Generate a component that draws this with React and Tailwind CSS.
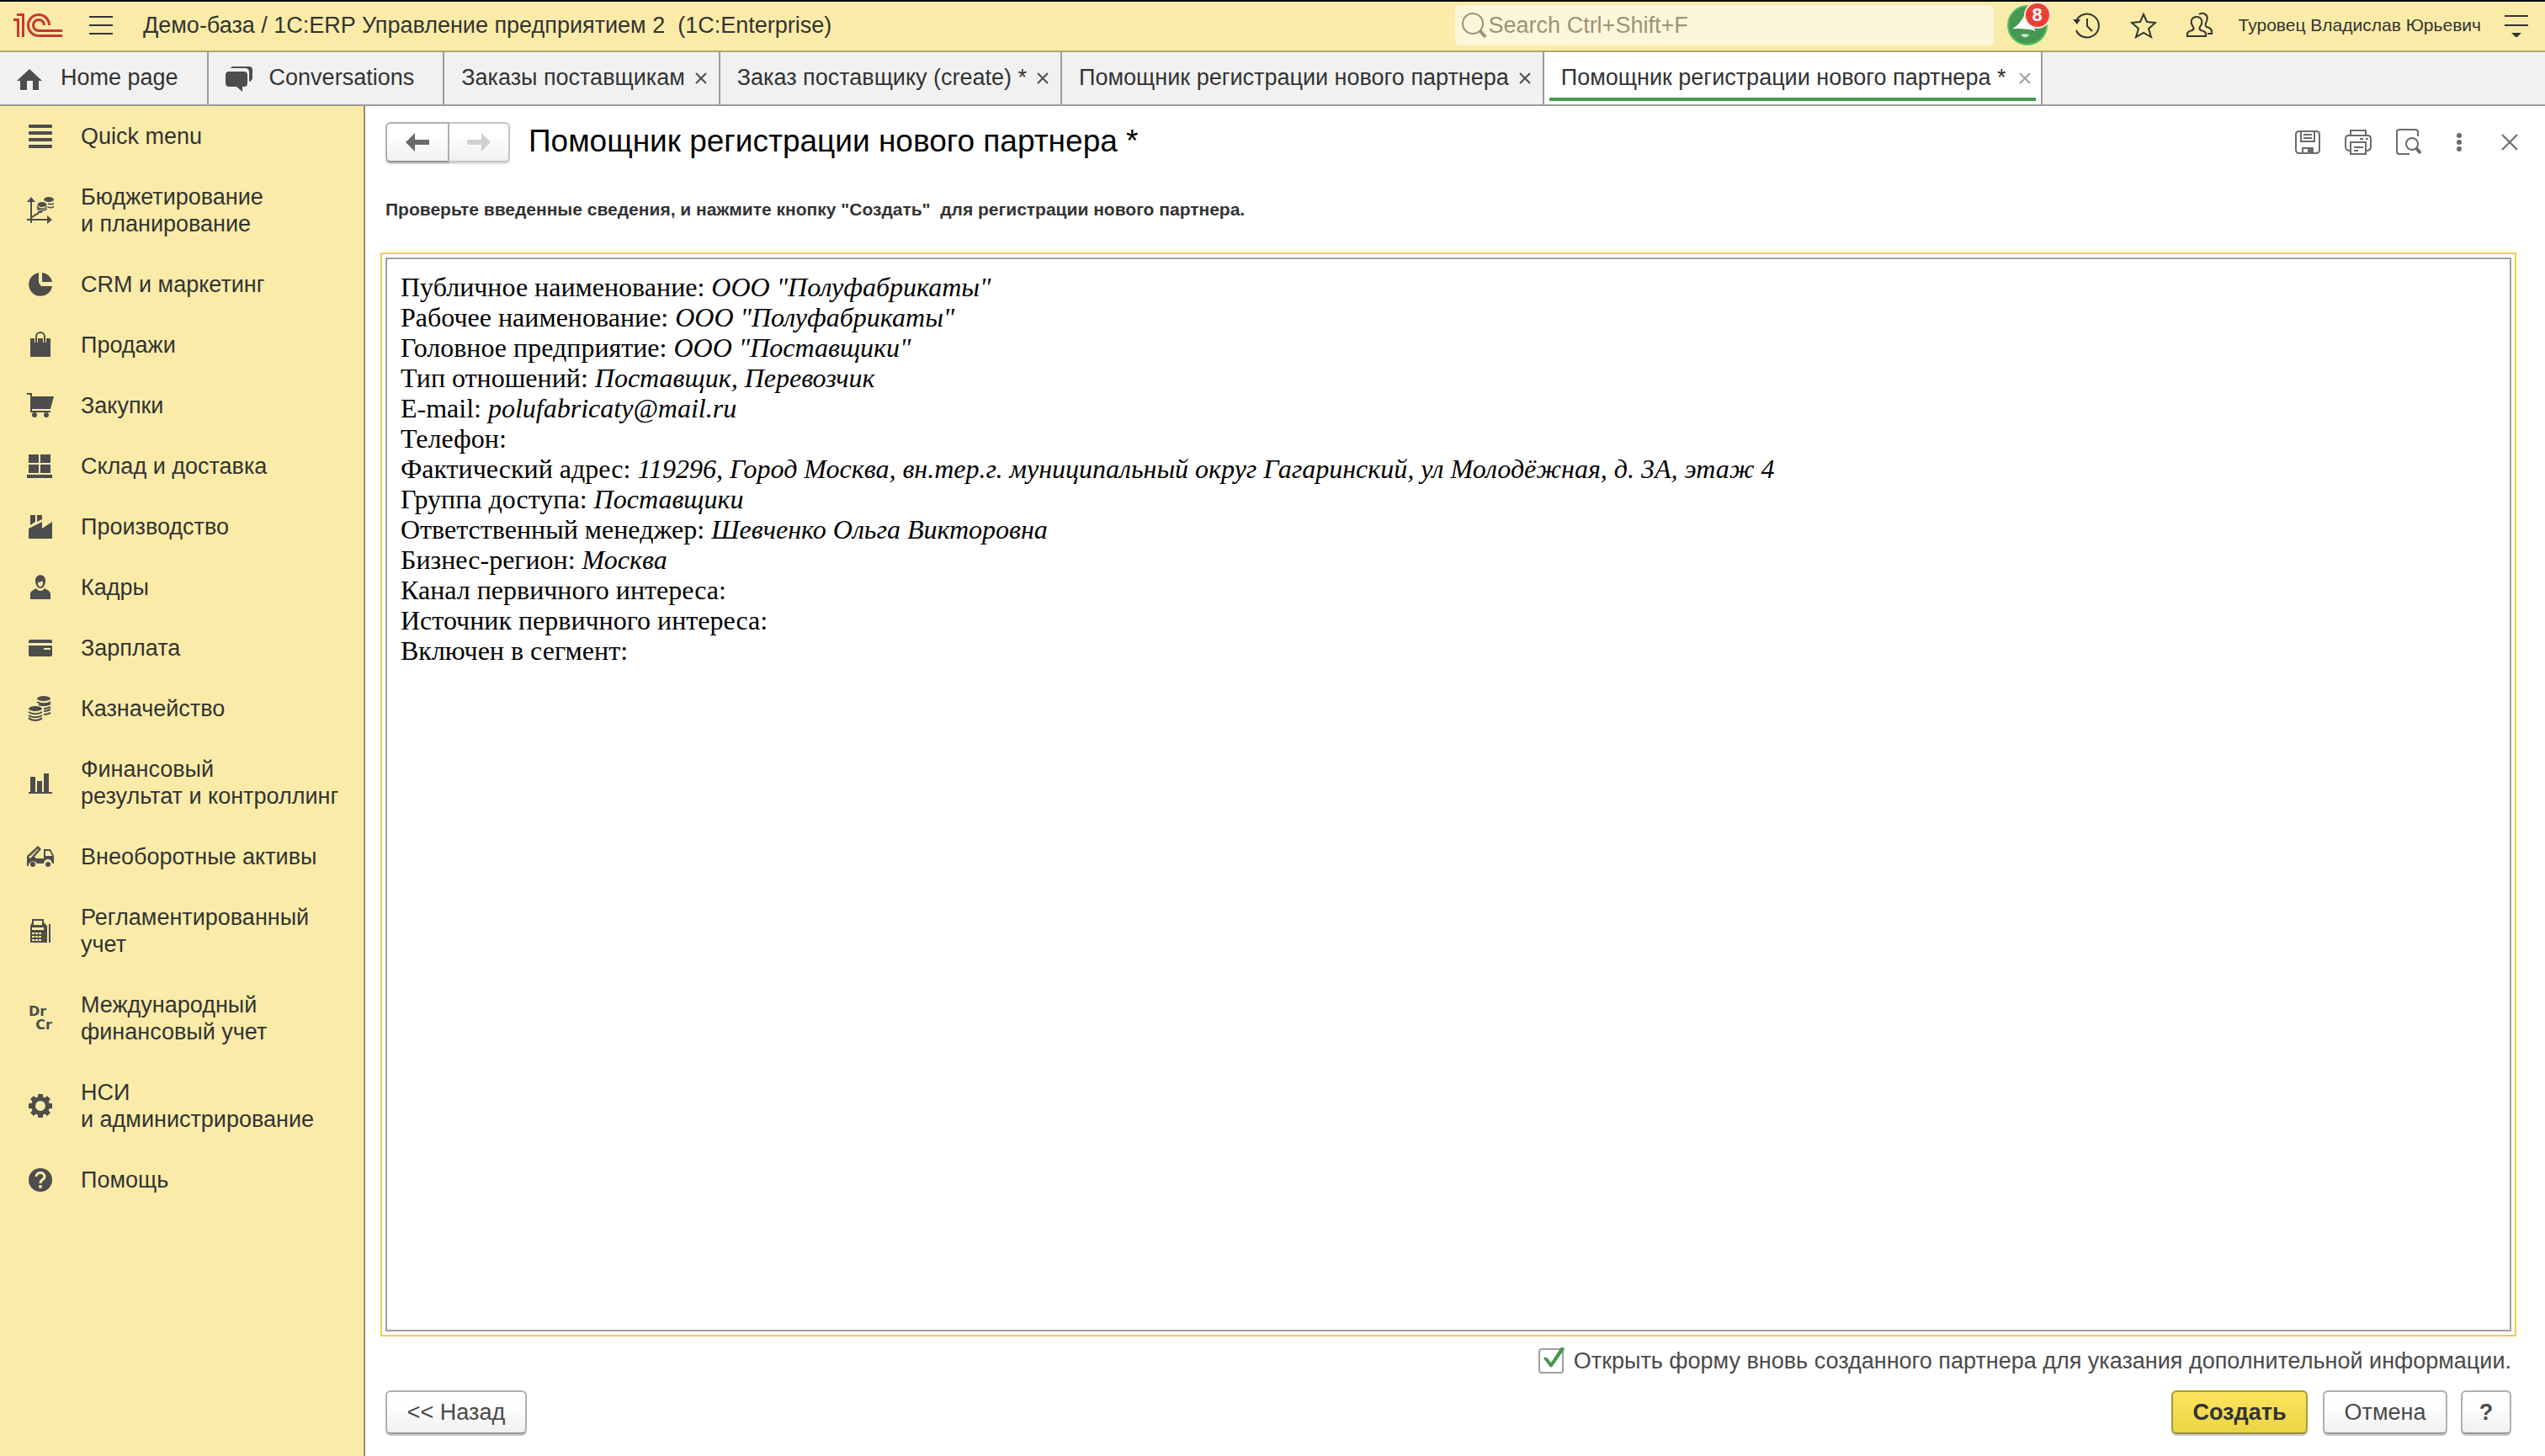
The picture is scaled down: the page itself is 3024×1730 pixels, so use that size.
import React from "react";

const G = "#4d4d4d";
const Y = "#faeca8";

const icons = {
  menu: (
    <g>
      <rect x="2" y="2" width="28" height="4" rx="1" />
      <rect x="2" y="10" width="28" height="4" rx="1" />
      <rect x="2" y="18" width="28" height="4" rx="1" />
      <rect x="2" y="26" width="28" height="4" rx="1" />
    </g>
  ),
  budget: (
    <g>
      <path d="M5 4v27M0 27h25M5 24l3-1 2-2 3-1 1-2h4" fill="none" stroke={G} strokeWidth="2" />
      <path d="M0 6l5-6 5 6zM24 22l6 5-6 5z" />
      <ellipse cx="26" cy="3" rx="6" ry="3" />
      <ellipse cx="18" cy="9" rx="5.500" ry="3" />
      <path d="M12 11c1 4 10 4 12 0M12 14c3 3 9 3 12 0M25 8c3 1 6 1 7-1M25 12c3 1 6 1 7-1" fill="none" stroke={G} strokeWidth="1.500" />
    </g>
  ),
  pie: (
    <g>
      <path d="M14 2a14 14 0 1 0 16 16H17l-3-4z" />
      <path d="M18 2v11h12A13 13 0 0 0 18 2z" />
    </g>
  ),
  bag: (
    <g>
      <path d="M4 8h24v22H4z" />
      <path d="M11 13V7a5 5 0 0 1 10 0v6" fill="none" stroke={Y} strokeWidth="4" />
      <path d="M11 13V6a5 5 0 0 1 10 0v7" fill="none" stroke={G} strokeWidth="2" />
    </g>
  ),
  cart: (
    <g>
      <path d="M0 1h6v4h26l-4 15H6v2h22v2H4V3H0z" />
      <circle cx="9" cy="27" r="3" />
      <circle cx="23" cy="27" r="3" />
    </g>
  ),
  boxes: <path d="M2 2h12v10H2zM16 2h12v10H16zM2 14h12v10H2zM16 14h12v10H16zM0 26h30v4H0z" />,
  factory: (
    <g>
      <path d="M2 18l16-8v8l12-8v20H2z" />
      <path d="M4 2h6v8l-6 4zM12 2h6v5l-6 3z" />
    </g>
  ),
  person: (
    <g>
      <path d="M10 8c0-9 12-9 12 0 0 4-2 9-6 9s-6-5-6-9z" />
      <path d="M13 10c2 0 4-1 5-2l1 2c0 3-1 5-3 5s-3-2-3-5z" fill={Y} />
      <path d="M4 30v-6c0-4 4-5 7-7 2 4 8 4 10 0 3 2 7 3 7 7v6z" />
    </g>
  ),
  card: (
    <g>
      <path d="M4 6h24a2 2 0 0 1 2 2v2H2V8a2 2 0 0 1 2-2zM2 13h28v11a2 2 0 0 1-2 2H4a2 2 0 0 1-2-2z" />
      <path d="M20 16h8v2h-8z" fill={Y} />
    </g>
  ),
  coins: (
    <g>
      <ellipse cx="20" cy="4" rx="8" ry="3" />
      <ellipse cx="10" cy="16" rx="8" ry="3" />
      <path
        d="M12 8c4 3 12 3 16 0M14 11c5 2 11 1 14-1M20 16c4 0 6-1 8-2M20 19c4 0 6-1 8-2M20 23c4 0 6-1 8-2M2 20c4 3 12 3 16 0M2 24c4 3 12 3 16 0M2 27c4 4 12 4 16 0"
        fill="none"
        stroke={G}
        strokeWidth="2"
      />
    </g>
  ),
  bars: <path d="M4 9h6v18H4zM12 14h6v13h-6zM20 5h6v22h-6zM2 27h28v2H2z" />,
  truck: (
    <g>
      <path d="M0 15L13 3l4 4-8 9 2 2h9V7h8l4 8v9h-2a5 5 0 0 0-10 0h-8a5 5 0 0 0-9 0H2v3H0z" />
      <path d="M22 9h5l3 6h-8zM2 16L13 6l1 1L4 18z" fill={Y} />
      <path d="M4 15l10-9" stroke={G} strokeWidth="1" strokeDasharray="2 1" />
      <circle cx="7" cy="25" r="3" />
      <circle cx="25" cy="25" r="3" />
    </g>
  ),
  calc: (
    <g>
      <path d="M6 2h14v4l4 4v20H4V10l2-4z" />
      <path
        d="M8 4h10v5H8zM6 12h14v3H6zM6 18h3v2H6zM10 18h3v2h-3zM14 18h3v2h-3zM6 22h3v2H6zM10 22h3v2h-3zM14 22h3v2h-3zM6 26h3v2H6zM10 26h3v2h-3zM14 26h3v2h-3z"
        fill={Y}
      />
      <path d="M26 8h2v22h-2z" />
    </g>
  ),
  gear: (
    <g>
      <path d="M13 2h6v5h-6zM13 25h6v5h-6zM2 13h5v6H2zM25 13h5v6h-5zM4 8l4-4 4 4-4 4zM20 8l4-4 4 4-4 4zM4 24l4-4 4 4-4 4zM20 24l4-4 4 4-4 4z" />
      <circle cx="16" cy="16" r="8.500" fill="none" stroke={G} strokeWidth="5" />
    </g>
  ),
  help: (
    <g>
      <circle cx="16" cy="16" r="14" />
      <path d="M11 12c0-6 10-6 10 0 0 4-5 3-5 8" fill="none" stroke={Y} strokeWidth="3" />
      <circle cx="16" cy="24" r="2" fill={Y} />
    </g>
  ),
};

const nav = [
  ["menu", "Quick menu"],
  ["budget", "Бюджетирование", "и планирование"],
  ["pie", "CRM и маркетинг"],
  ["bag", "Продажи"],
  ["cart", "Закупки"],
  ["boxes", "Склад и доставка"],
  ["factory", "Производство"],
  ["person", "Кадры"],
  ["card", "Зарплата"],
  ["coins", "Казначейство"],
  ["bars", "Финансовый", "результат и контроллинг"],
  ["truck", "Внеоборотные активы"],
  ["calc", "Регламентированный", "учет"],
  ["drcr", "Международный", "финансовый учет"],
  ["gear", "НСИ", "и администрирование"],
  ["help", "Помощь"],
];

const tabs = [
  "Заказы поставщикам",
  "Заказ поставщику (create) *",
  "Помощник регистрации нового партнера",
];

const fields = [
  ["Публичное наименование:", 'ООО "Полуфабрикаты"'],
  ["Рабочее наименование:", 'ООО "Полуфабрикаты"'],
  ["Головное предприятие:", 'ООО "Поставщики"'],
  ["Тип отношений:", "Поставщик, Перевозчик"],
  ["E-mail:", "polufabricaty@mail.ru"],
  ["Телефон:", ""],
  [
    "Фактический адрес:",
    "119296, Город Москва, вн.тер.г. муниципальный округ Гагаринский, ул Молодёжная, д. 3А, этаж 4",
  ],
  ["Группа доступа:", "Поставщики"],
  ["Ответственный менеджер:", "Шевченко Ольга Викторовна"],
  ["Бизнес-регион:", "Москва"],
  ["Канал первичного интереса:", ""],
  ["Источник первичного интереса:", ""],
  ["Включен в сегмент:", ""],
];

function NavIcon({ name }) {
  if (name === "drcr") {
    return (
      <span className="flex w-8 shrink-0 flex-col px-0.5 font-['DejaVu_Sans',sans-serif] text-base leading-4 font-bold text-[#4d4d4d]">
        <span>Dr</span>
        <span className="self-end">Cr</span>
      </span>
    );
  }
  return (
    <svg viewBox="0 0 32 32" className="h-8 w-8 shrink-0" fill={G} aria-hidden="true">
      {icons[name]}
    </svg>
  );
}

function Tab({ label, active }) {
  return (
    <div
      className={
        active
          ? "relative flex items-center gap-4 border-r-2 border-[#9c9c9c] bg-white pr-3 pl-5"
          : "flex items-center gap-3 border-r-2 border-[#9c9c9c] pr-3.5 pl-5"
      }
    >
      <button className="pb-0.5 whitespace-nowrap">{label}</button>
      <button aria-label="Close tab">
        <svg
          viewBox="0 0 14 14"
          className="h-3.5 w-3.5"
          fill="none"
          stroke={active ? "#a0a0a0" : G}
          strokeWidth="2"
          aria-hidden="true"
        >
          <path d="M1 1l12 12M13 1L1 13" />
        </svg>
      </button>
      {active && <span className="absolute right-1.5 bottom-1 left-1.5 h-1 bg-[#45984f]" />}
    </div>
  );
}

function Header() {
  return (
    <header className="flex h-[62px] items-center border-t-2 border-b-2 border-t-black border-b-[#aea576] bg-[#faeca8] pr-5 pb-0.5 pl-4">
      <svg viewBox="0 0 58 28" className="h-7 w-[58px]" fill="none" stroke="#cb3532" strokeWidth="3" role="img" aria-label="1C">
        <path d="M4 1.500H11.500V28M0 7.500H5.500V28" />
        <path d="M42.500 14A12.500 12.500 0 1 0 30 26.500H58M36.500 14A6.500 6.500 0 1 0 30 20.500H58" />
      </svg>
      <button aria-label="Main menu" className="ml-8">
        <svg viewBox="0 0 28 22" className="h-[22px] w-7" stroke="#333" strokeWidth="2" aria-hidden="true">
          <path d="M0 1h28M0 11h28M0 21h28" />
        </svg>
      </button>
      <h1 className="ml-9 whitespace-pre">{"Демо-база / 1С:ERP Управление предприятием 2  (1C:Enterprise)"}</h1>
      <label className="ml-auto flex h-12 w-[640px] items-center rounded-md bg-[#fdf6da] pl-2">
        <svg viewBox="0 0 30 32" className="h-8 w-[30px] shrink-0" fill="none" stroke="#9a9478" strokeWidth="2" aria-hidden="true">
          <circle cx="13" cy="14" r="12" />
          <path d="M22 23l6 7" strokeWidth="4" />
        </svg>
        <input
          aria-label="Search"
          placeholder="Search Ctrl+Shift+F"
          className="ml-0.5 w-full bg-transparent outline-none placeholder:text-[#9a9478]"
        />
      </label>
      <button aria-label="Notifications" className="relative ml-4">
        <svg viewBox="0 0 48 48" className="h-12 w-12" aria-hidden="true">
          <circle cx="24" cy="24" r="23" fill="#45984f" stroke="#56c46a" strokeWidth="2" />
          <path d="M6 28c6-3 11-9 15-17l13 20c-8-3-18-3-28-3z" fill="#fff" />
          <path d="M16 35c3-1 6-1 10 0-1 4-7 5-10 0z" fill="#fff" opacity=".75" />
        </svg>
        <span className="absolute -top-1 -right-1 flex h-8 w-8 items-center justify-center rounded-full border-2 border-[#fbe9dc] bg-[#ec4034] text-[22px] leading-6 font-bold text-white">
          8
        </span>
      </button>
      <button aria-label="History" className="ml-[30px]">
        <svg viewBox="0 0 32 32" className="h-8 w-8" fill="none" stroke="#333" strokeWidth="2" aria-hidden="true">
          <path d="M4 11A14 14 0 1 1 4 22" />
          <path d="M17 8v9l6 6" />
          <path d="M0 9h9l-4 6z" fill="#333" stroke="none" />
        </svg>
      </button>
      <button aria-label="Favorites" className="ml-9">
        <svg viewBox="0 0 32 32" className="h-8 w-8" fill="none" stroke="#333" strokeWidth="2" aria-hidden="true">
          <path d="M16 3l4 9 10 1-8 7 3 10-9-5-9 5 3-10-8-7 10-1z" />
        </svg>
      </button>
      <button className="ml-[34px] flex items-center gap-[29px] text-[21px]">
        <svg viewBox="0 0 34 32" className="h-8 w-[34px]" fill="none" stroke="#333" strokeWidth="2" aria-hidden="true">
          <path d="M2 29c-1-5 2-6 6-7 2-1 2-2 1-4-5-7-1-12 4-12s9 5 4 12c-1 2-1 3 1 4 4 1 7 2 6 7z" />
          <path d="M16 3c4-3 12 0 9 8-1 3-3 5 0 7 4 1 7 3 6 8h-5" />
        </svg>
        Туровец Владислав Юрьевич
      </button>
      <button aria-label="Options" className="ml-7">
        <svg viewBox="0 0 28 28" className="h-7 w-7" stroke="#333" strokeWidth="2" aria-hidden="true">
          <path d="M0 3h28M0 14h28" />
          <path d="M8 23h12l-6 6z" fill="#333" stroke="none" />
        </svg>
      </button>
    </header>
  );
}

function Tool({ label, children }) {
  return (
    <button aria-label={label} className="flex w-[60px] justify-center">
      <svg viewBox="0 0 32 32" className="h-8 w-8" fill="none" stroke="#6b6b6b" strokeWidth="2" aria-hidden="true">
        {children}
      </svg>
    </button>
  );
}

const plain =
  "flex h-[52px] items-center justify-center rounded-md border-2 border-[#b0b0b0] border-b-[#969696] bg-linear-to-b from-white from-30% to-[#f0f0f0] text-[#4a4a4a] shadow-[0_2px_0_#cccccc]";

export default function App() {
  return (
    <div className="flex min-h-screen flex-col bg-white font-['Liberation_Sans',Arial,sans-serif] text-[27px] leading-8 text-[#333333]">
      <Header />
      <nav className="flex h-16 border-b-2 border-[#9c9c9c] bg-[#f1f1f1]">
        <button className="flex items-center gap-5 border-r-2 border-[#9c9c9c] pr-[34px] pl-5">
          <svg viewBox="0 0 32 32" className="h-8 w-8" fill={G} aria-hidden="true">
            <path d="M4 30h24v2H4z" fill="#fff" />
            <path d="M15 5l15 14h-4v11h-7V19h-7v11H4V19H0z" />
            <path d="M12 30h7v2h-7z" fill="#f1f1f1" />
          </svg>
          <span className="pb-0.5">Home page</span>
        </button>
        <button className="flex items-center gap-5 border-r-2 border-[#9c9c9c] pr-[34px] pl-5">
          <svg viewBox="0 0 32 32" className="h-8 w-8" fill={G} aria-hidden="true">
            <path d="M6 4c1-2 2-2 4-2h18q4 0 4 4v9q0 4-4 5V9q0-5-5-5z" />
            <path d="M4 8h18q4 0 4 4v10q0 4-4 4h-2v6l-7-6H4q-4 0-4-4V12q0-4 4-4z" />
          </svg>
          <span className="pb-0.5">Conversations</span>
        </button>
        {tabs.map((t) => (
          <Tab key={t} label={t} />
        ))}
        <Tab label="Помощник регистрации нового партнера *" active />
      </nav>
      <div className="flex grow">
        <aside className="w-[434px] shrink-0 border-r-2 border-[#938c68] bg-[#faeca8]">
          {nav.map(([icon, a, b]) => (
            <button key={a} className="flex w-full items-center gap-8 py-5 pl-8 text-left whitespace-nowrap">
              <NavIcon name={icon} />
              <span>
                {a}
                {b && <br />}
                {b}
              </span>
            </button>
          ))}
        </aside>
        <main className="flex min-w-0 grow flex-col pt-[18px] pr-[34px] pb-[26px] pl-[18px]">
          <div className="-mr-[22px] flex h-[50px] items-center pl-1.5">
            <div className="flex">
              <button
                aria-label="Back"
                className="flex h-12 w-[76px] items-center justify-center rounded-l-md border-2 border-[#b0b0b0] border-b-[#969696] bg-linear-to-b from-white from-30% to-[#f0f0f0] shadow-[0_2px_0_#cccccc]"
              >
                <svg viewBox="0 0 28 22" className="h-[22px] w-7" fill="#6b6b6b" aria-hidden="true">
                  <path d="M0 11L11 0v8h17v6H11v8z" />
                </svg>
              </button>
              <button
                aria-label="Forward"
                className="flex h-12 w-[72px] items-center justify-center rounded-r-md border-2 border-l-0 border-[#c4c4c4] bg-linear-to-b from-white from-30% to-[#f0f0f0] shadow-[0_2px_0_#dddddd]"
              >
                <svg viewBox="0 0 28 22" className="h-[22px] w-7" fill="#d0d0d0" aria-hidden="true">
                  <path d="M28 11L17 0v8H0v6h17v8z" />
                </svg>
              </button>
            </div>
            <h2 className="ml-[22px] pb-0.5 text-[37px] leading-[46px] text-black">
              Помощник регистрации нового партнера *
            </h2>
            <div className="ml-auto flex">
              <Tool label="Save">
                <path d="M6 3h20q4 0 4 4v18q0 4-4 4H6q-4 0-4-4V7q0-4 4-4z" />
                <path d="M8 3v12h16V3M11 7h10M11 11h10" />
                <path d="M10 29v-6h12v6" />
                <path d="M16 22h7v8h-7z" fill="#6b6b6b" stroke="none" />
              </Tool>
              <Tool label="Print">
                <path d="M7 8V2h18v6M7 26H5q-4-1-4-5v-9q0-4 4-4h22q4 0 4 4v9q0 4-4 5h-2" />
                <path d="M7 16h18v14H7zM11 22h11M11 26h5M18 12h4M25 12h3" />
              </Tool>
              <Tool label="Preview">
                <path d="M17 30H5q-3 0-3-3V4q0-3 3-3h19q3 0 3 3v5" />
                <circle cx="20" cy="18" r="7" />
                <path d="M25 23l5 6" strokeWidth="4" />
              </Tool>
              <Tool label="More">
                <g fill="#6b6b6b" stroke="none">
                  <circle cx="16" cy="8" r="3" />
                  <circle cx="16" cy="16" r="3" />
                  <circle cx="16" cy="24" r="3" />
                </g>
              </Tool>
              <Tool label="Close">
                <path d="M7 7l18 18M25 7L7 25" />
              </Tool>
            </div>
          </div>
          <p className="mt-[39px] pl-1.5 text-[21px] font-bold whitespace-pre">
            {'Проверьте введенные сведения, и нажмите кнопку "Создать"  для регистрации нового партнера.'}
          </p>
          <div className="mt-[35px] flex grow border-2 border-[#efcd50] p-1">
            <div className="grow border-2 border-[#9f9f9f] px-4 py-[15px] font-['Liberation_Serif','Times_New_Roman',serif] text-[32px] leading-9 text-black">
              {fields.map(([k, v]) => (
                <p key={k}>
                  {k} <i>{v}</i>
                </p>
              ))}
            </div>
          </div>
          <label className="mt-[13px] mr-1.5 flex items-center gap-3 self-end text-[#4a4a4a]">
            <span className="relative flex">
              <input
                type="checkbox"
                defaultChecked
                className="h-[30px] w-[30px] appearance-none rounded-sm border-2 border-[#9f9f9f] bg-white"
              />
              <svg
                viewBox="0 0 30 30"
                className="pointer-events-none absolute inset-0 h-[30px] w-[30px] overflow-visible"
                fill="#45984f"
                aria-hidden="true"
              >
                <path d="M6 12q2-3 5 0l4 5L26 0q3-3 5 1L17 21q-2 3-4 0z" />
              </svg>
            </span>
            Открыть форму вновь созданного партнера для указания дополнительной информации.
          </label>
          <div className="mt-[19px] flex items-center px-1.5">
            <button className={plain + " w-[168px]"}>{"<< Назад"}</button>
            <button className="ml-auto flex h-[52px] w-[162px] items-center justify-center rounded-md border-2 border-[#a99b34] border-b-[#958a3c] bg-linear-to-b from-[#fde65e] to-[#ebd444] font-bold shadow-[0_2px_0_#cccccc]">
              Создать
            </button>
            <button className={plain + " ml-[18px] w-[148px]"}>Отмена</button>
            <button aria-label="Help" className={plain + " ml-4 w-[60px] font-bold"}>
              ?
            </button>
          </div>
        </main>
      </div>
    </div>
  );
}
